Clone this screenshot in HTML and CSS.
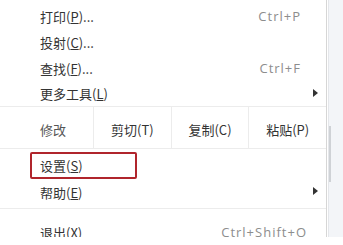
FILE: index.html
```html
<!DOCTYPE html>
<html>
<head>
<meta charset="utf-8">
<link rel="stylesheet" href="styles.css">
</head>
<body>
<div class="screen">
  <div class="menu">
    <div class="topline"></div>
    <div class="item"><span class="label">打印(<u>P</u>)...</span><span class="key">Ctrl+P</span></div>
    <div class="item"><span class="label">投射(<u>C</u>)...</span></div>
    <div class="item"><span class="label">查找(<u>F</u>)...</span><span class="key">Ctrl+F</span></div>
    <div class="item item-short"><span class="label">更多工具(<u>L</u>)</span><span class="arrow"></span></div>
    <div class="edit-row">
      <div class="edit-label">修改</div>
      <div class="edit-cell">剪切(T)</div>
      <div class="edit-cell">复制(C)</div>
      <div class="edit-cell">粘贴(P)</div>
    </div>
    <div class="item item-first"><span class="highlight">设置(<u>S</u>)</span></div>
    <div class="item"><span class="label">帮助(<u>E</u>)</span><span class="arrow"></span></div>
    <div class="sep"></div>
    <div class="item item-exit"><span class="label">退出(<u>X</u>)</span><span class="key">Ctrl+Shift+Q</span></div>
  </div>
  <div class="rail"><div class="thumb"></div></div>
</div>
</body>
</html>
```
FILE: styles.css
```css
html, body {
  margin: 0;
  padding: 0;
  background: #ffffff;
}
.screen {
  display: flex;
  width: 343px;
  height: 237px;
  overflow: hidden;
  font-family: "Noto Sans CJK SC", "Noto Sans", sans-serif;
  font-size: 13px;
  color: #333333;
}
.menu {
  width: 326px;
  border-right: 1px solid #d6d6d6;
  background: #ffffff;
  display: flex;
  flex-direction: column;
  padding-top: 3px;
}
.topline {
  height: 1px;
  background: #ececec;
}
.item {
  height: 26px;
  display: flex;
  align-items: center;
  flex-shrink: 0;
  padding-right: 25px;
}
.item-short {
  height: 25px;
}
.label {
  padding-left: 40px;
  line-height: 1;
}
u {
  text-decoration: underline;
  text-underline-offset: 1px;
  text-decoration-thickness: 1px;
}
.key {
  margin-left: auto;
  font-family: "Open Sans", "Liberation Sans", sans-serif;
  font-size: 13px;
  letter-spacing: 1px;
  color: #8d8d8d;
}
.item-exit .key {
  margin-right: -6px;
}
.arrow {
  margin-left: auto;
  margin-right: -17px;
  width: 0;
  height: 0;
  border-top: 4px solid transparent;
  border-bottom: 4px solid transparent;
  border-left: 5px solid #333333;
  margin-top: -2px;
}
.edit-row {
  display: flex;
  height: 41px;
  border-top: 1px solid #ececec;
  border-bottom: 1px solid #ececec;
  flex-shrink: 0;
}
.edit-label {
  width: 93px;
  padding-left: 40px;
  box-sizing: border-box;
  display: flex;
  align-items: center;
  padding-top: 3px;
  color: #555555;
}
.edit-cell {
  flex: 1;
  border-left: 1px solid #ececec;
  display: flex;
  align-items: center;
  justify-content: center;
  padding-top: 3px;
}
.item-first {
  margin-top: 3px;
  height: 27px;
}
.highlight {
  margin-left: 30px;
  width: 107px;
  height: 27px;
  box-sizing: border-box;
  border: 2px solid #b0252c;
  border-radius: 2px;
  display: flex;
  align-items: center;
  padding-left: 8px;
}
.sep {
  height: 1px;
  background: #ececec;
  margin-top: 3px;
  margin-bottom: 6px;
  flex-shrink: 0;
}
.item-exit {
  height: 34px;
  align-items: center;
}
.rail {
  flex: 1;
  background: #f3f5f8;
  border-left: 1px solid #e4e6ea;
  margin-left: 1px;
}
.thumb {
  width: 2px;
  height: 56px;
  margin-top: 126px;
  background: #cfd2d6;
}
```
